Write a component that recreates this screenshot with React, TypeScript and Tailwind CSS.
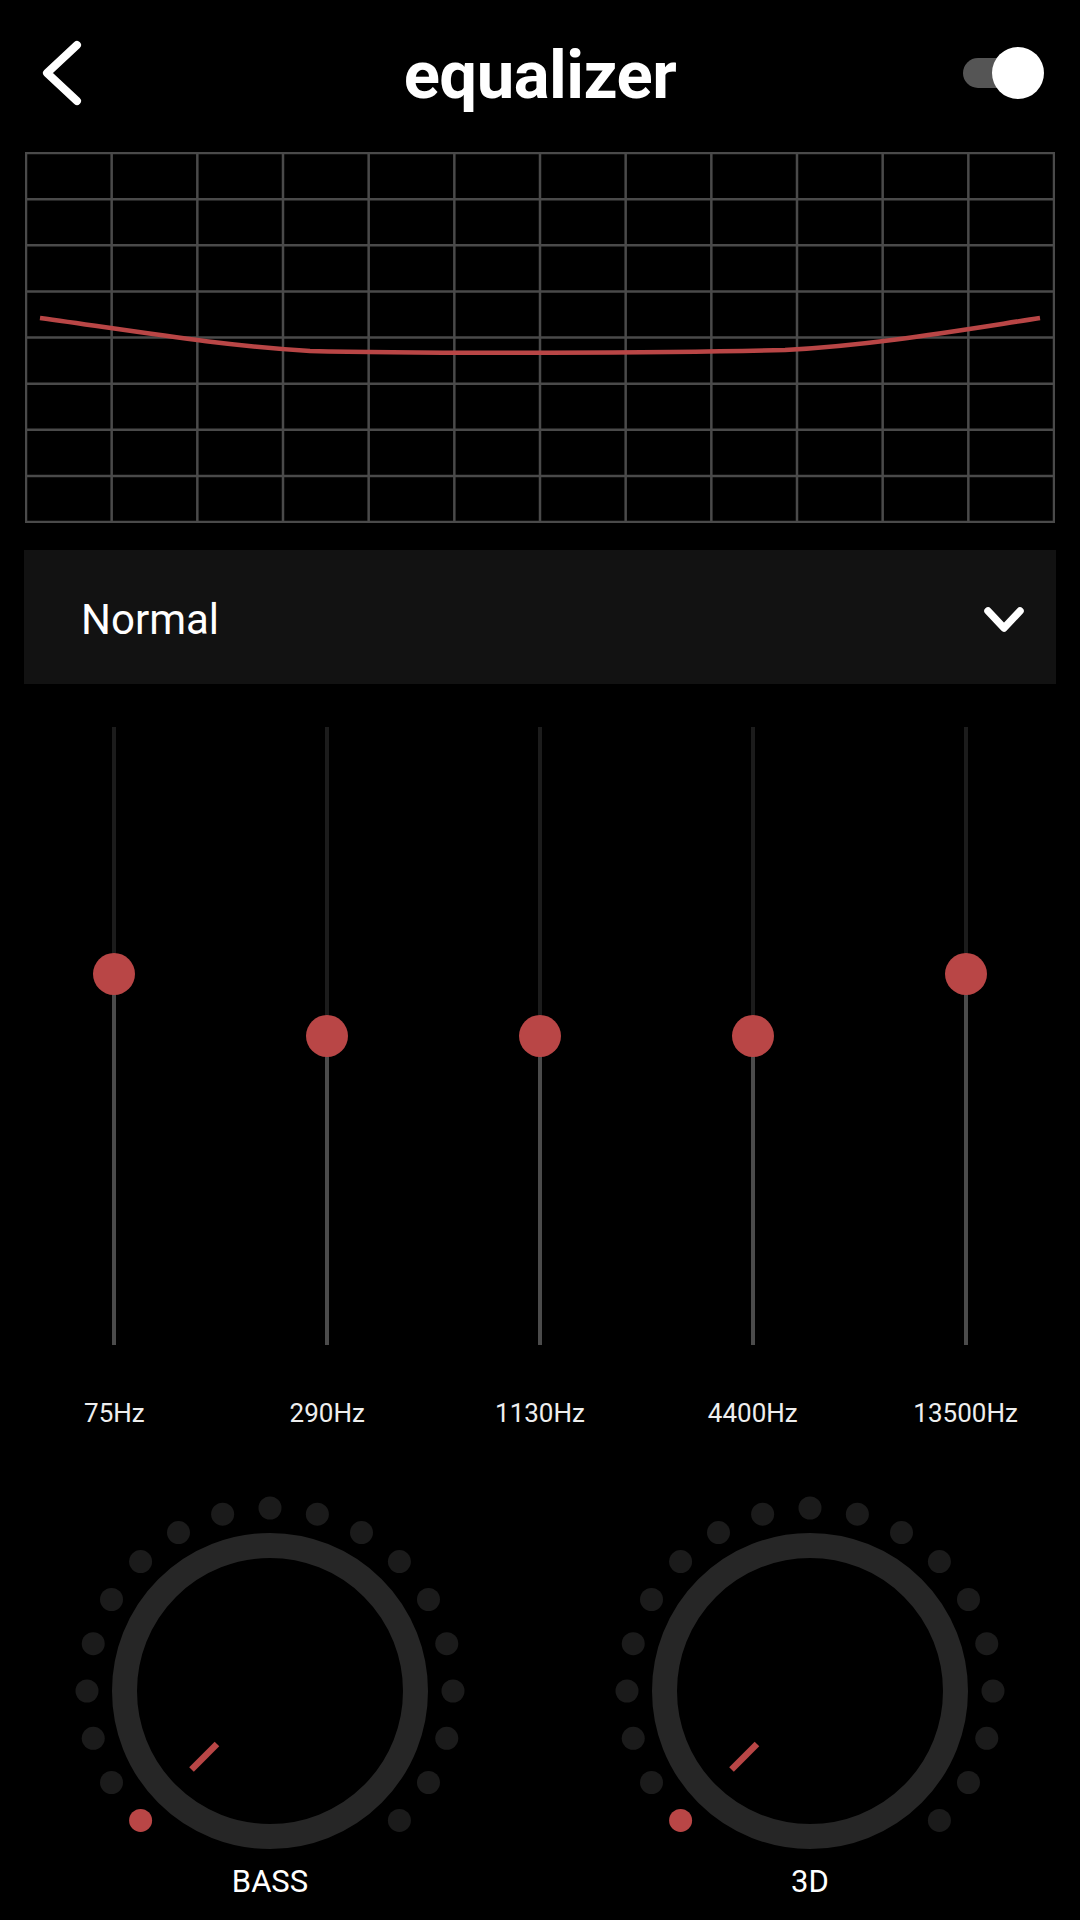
import React from "react";

const RED = "#b94646";

const BANDS = [
  { label: "75Hz", value: 3 },
  { label: "290Hz", value: 0 },
  { label: "1130Hz", value: 0 },
  { label: "4400Hz", value: 0 },
  { label: "13500Hz", value: 3 },
];

function EqGraph() {
  const w = 1030;
  const h = 371;
  const cols = 12;
  const rows = 8;
  const cw = (w - 2) / cols;
  const rh = (h - 2) / rows;
  return (
    <svg width={w} height={h} viewBox={`0 0 ${w} ${h}`} className="block">
      {Array.from({ length: cols + 1 }, (_, i) => (
        <line key={"v" + i} x1={1 + i * cw} y1={0} x2={1 + i * cw} y2={h} stroke="#4a4a4a" strokeWidth={2.5} />
      ))}
      {Array.from({ length: rows + 1 }, (_, j) => (
        <line key={"h" + j} x1={0} y1={1 + j * rh} x2={w} y2={1 + j * rh} stroke="#4a4a4a" strokeWidth={2.5} />
      ))}
      <path
        d="M15 166 C 110 179 190 193 285 199 C 400 202 650 201 760 198 C 850 193 930 179 1015 166"
        fill="none"
        stroke={RED}
        strokeWidth={4.5}
      />
    </svg>
  );
}

function Slider({ value }: { value: number }) {
  const H = 618;
  const mid = H / 2;
  const y = mid - (value / 15) * mid;
  return (
    <div className="relative flex h-[618px] justify-center">
      <div className="flex h-full w-[4px] flex-col">
        <div className="w-full bg-[#1c1c1c]" style={{ height: y }} />
        <div className="w-full flex-1 bg-[#4b4b4b]" />
      </div>
      <div
        className="absolute left-1/2 h-[42px] w-[42px] -translate-x-1/2 -translate-y-1/2 rounded-full bg-[#b94646]"
        style={{ top: y }}
      />
    </div>
  );
}

function Knob({ label }: { label: string }) {
  const cx = 200;
  const cy = 200;
  const angles = Array.from({ length: 19 }, (_, i) => -135 + i * 15);
  const d = Math.SQRT1_2;
  return (
    <div className="flex flex-col items-center">
      <svg width={400} height={362} viewBox="0 0 400 362" className="block">
        {angles.map((a, i) => {
          const r = (a * Math.PI) / 180;
          return (
            <circle
              key={i}
              cx={cx + 183 * Math.sin(r)}
              cy={cy - 183 * Math.cos(r)}
              r={11.5}
              fill={i === 0 ? RED : "#1b1b1b"}
            />
          );
        })}
        <circle cx={cx} cy={cy} r={145.5} fill="none" stroke="#262626" strokeWidth={25} />
        <line
          x1={cx - 75 * d}
          y1={cy + 75 * d}
          x2={cx - 111 * d}
          y2={cy + 111 * d}
          stroke={RED}
          strokeWidth={6.5}
        />
      </svg>
      <div className="mt-[11px] text-[31px] leading-[36px] text-white">{label}</div>
    </div>
  );
}

export default function App() {
  return (
    <div className="h-[1920px] w-[1080px] overflow-hidden bg-black font-['Roboto','Noto_Sans',sans-serif] text-white">
      {/* Header */}
      <div className="grid h-[146px] grid-cols-[1fr_auto_1fr] items-center">
        <div className="flex items-center">
          <svg width={50} height={76} viewBox="0 0 50 76" className="ml-[35px] block">
            <polyline
              points="42,10 12,38 42,66"
              fill="none"
              stroke="white"
              strokeWidth={8}
              strokeLinecap="round"
              strokeLinejoin="round"
            />
          </svg>
        </div>
        <div className="mt-[4px] text-[67px] font-bold leading-none tracking-[-0.5px]">equalizer</div>
        <div className="flex justify-end">
          <div className="relative mr-[36px] h-[52px] w-[81px]">
            <div className="absolute left-0 top-[11px] h-[30px] w-[72px] rounded-full bg-[#555555]" />
            <div className="absolute right-0 top-0 h-[52px] w-[52px] rounded-full bg-white" />
          </div>
        </div>
      </div>

      {/* Graph */}
      <div className="ml-[25px] mt-[6px]">
        <EqGraph />
      </div>

      {/* Preset dropdown */}
      <div className="mx-[24px] mt-[27px] flex h-[134px] items-center justify-between bg-[#121212] pl-[57px] pr-[30px]">
        <span className="translate-y-[3px] text-[42px] leading-none text-white">Normal</span>
        <svg width={44} height={32} viewBox="0 0 44 32" className="block translate-y-[2px]">
          <polyline
            points="6,8 22,25 38,8"
            fill="none"
            stroke="white"
            strokeWidth={7.5}
            strokeLinecap="round"
            strokeLinejoin="round"
          />
        </svg>
      </div>

      {/* Sliders */}
      <div className="mt-[43px] grid grid-cols-5 px-[8px]">
        {BANDS.map((b) => (
          <Slider key={b.label} value={b.value} />
        ))}
      </div>
      <div className="mt-[53px] grid grid-cols-5 px-[8px] text-center text-[26px] leading-[30px] text-[#eeeeee]">
        {BANDS.map((b) => (
          <div key={b.label}>{b.label}</div>
        ))}
      </div>

      {/* Knobs */}
      <div className="mt-[63px] grid grid-cols-2">
        <Knob label="BASS" />
        <Knob label="3D" />
      </div>
    </div>
  );
}
